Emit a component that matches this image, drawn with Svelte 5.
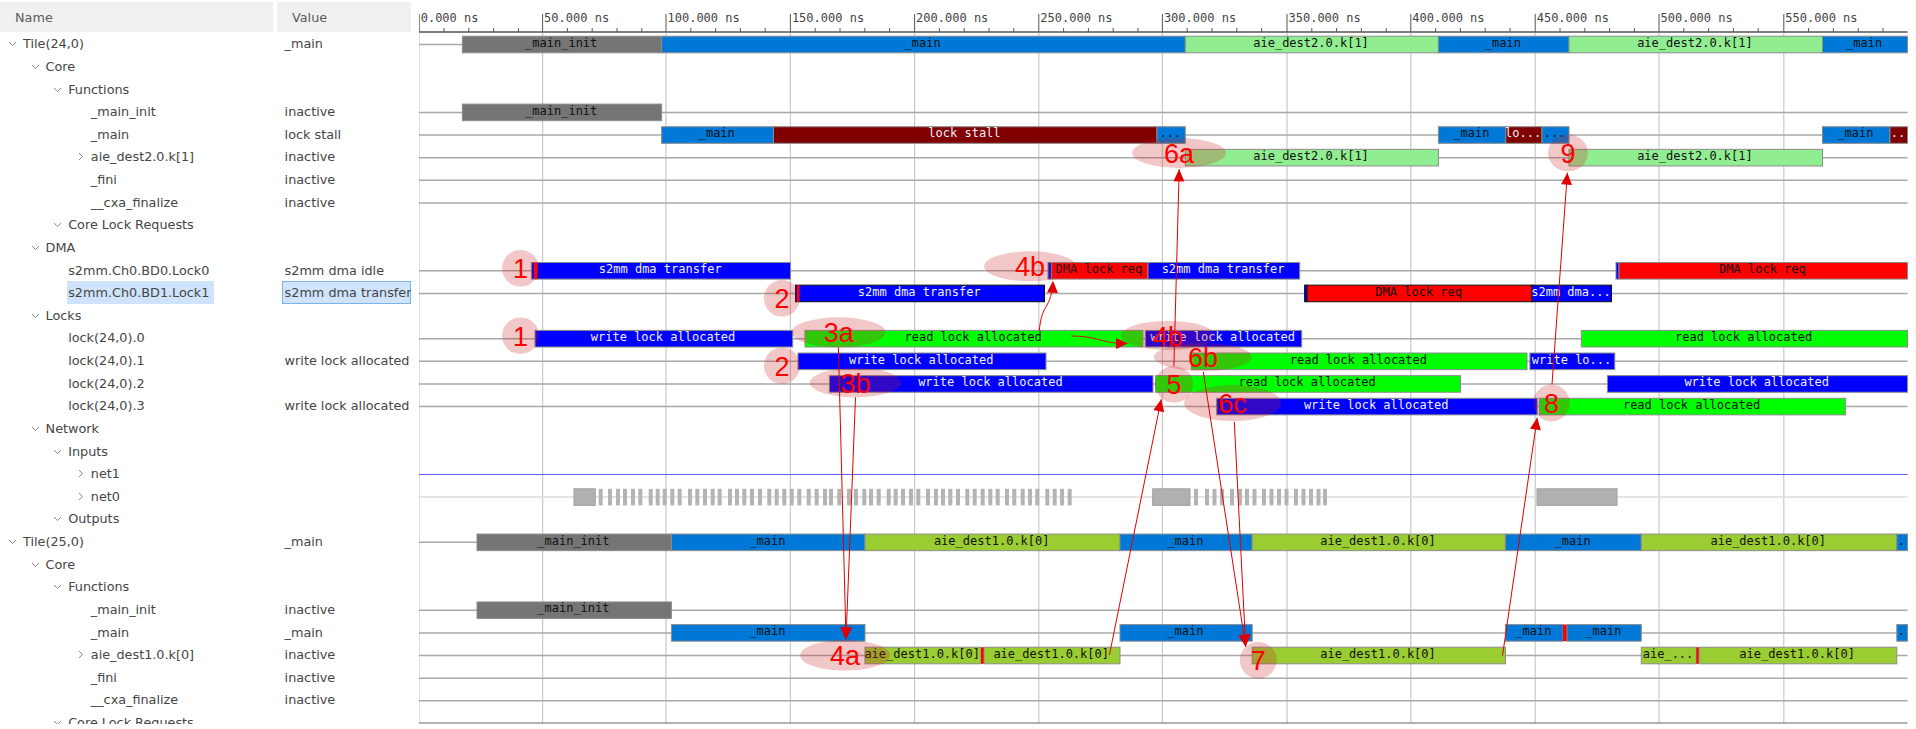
<script>
    // tree rows: name, value, depth, chevron (down / right / none)
    const tile = (n, fn, mainVal) => [
        [`Tile(${n},0)`, "_main", 0, "d"],
        ["Core", "", 1, "d"],
        ["Functions", "", 2, "d"],
        ["_main_init", "inactive", 3],
        ["_main", mainVal, 3],
        [fn, "inactive", 3, "r"],
        ["_fini", "inactive", 3],
        ["__cxa_finalize", "inactive", 3],
        ["Core Lock Requests", "", 2, "d"],
    ];

    const rows = [
        ...tile(24, "aie_dest2.0.k[1]", "lock stall"),
        ["DMA", "", 1, "d"],
        ["s2mm.Ch0.BD0.Lock0", "s2mm dma idle", 2],
        ["s2mm.Ch0.BD1.Lock1", "s2mm dma transfer", 2, null, true],
        ["Locks", "", 1, "d"],
        ["lock(24,0).0", "", 2],
        ["lock(24,0).1", "write lock allocated", 2],
        ["lock(24,0).2", "", 2],
        ["lock(24,0).3", "write lock allocated", 2],
        ["Network", "", 1, "d"],
        ["Inputs", "", 2, "d"],
        ["net1", "", 3, "r"],
        ["net0", "", 3, "r"],
        ["Outputs", "", 2, "d"],
        ...tile(25, "aie_dest1.0.k[0]", "_main"),
    ];

    const rowY = (i) => 44.5 + 22.63 * i;

    const ticks = [419.2, 542.6, 666, 790.4, 914.6, 1038.8, 1162.4, 1287, 1410.8, 1535.2, 1659, 1783.8];
    const ends = 1907.5;
    const minors = ticks.flatMap((t) => [1, 2, 3, 4].map((k) => t + 24.8 * k)).filter((x) => x < ends);
    const tickLabel = (i) => `${(i * 50).toFixed(3)} ns`;

    const signalRows = [0, 3, 4, 5, 6, 7, 10, 11, 13, 14, 15, 16, 22, 25, 26, 27, 28, 29];

    const D2 = "aie_dest2.0.k[1]";
    const D1 = "aie_dest1.0.k[0]";
    const WL = "write lock allocated";
    const RL = "read lock allocated";
    const S2 = "s2mm dma transfer";
    const LR = "DMA lock req";

    // [row, x1, x2, kind, label]
    const bars = [
        [0, 462.4, 661.6, "init", "_main_init"],
        [0, 661.6, 1185.3, "main", "_main"],
        [0, 1185.3, 1438.4, "fn2", D2],
        [0, 1438.4, 1569, "main", "_main"],
        [0, 1569, 1822.5, "fn2", D2],
        [0, 1822.5, ends, "main", "_main"],
        [3, 462.4, 661.6, "init", "_main_init"],
        [4, 661.6, 773.5, "main", "_main"],
        [4, 773.5, 1157, "stall", "lock stall"],
        [4, 1157, 1185.3, "main", "..."],
        [4, 1438.4, 1505.8, "main", "_main"],
        [4, 1505.8, 1542, "stall", "lo..."],
        [4, 1542, 1569, "main", "..."],
        [4, 1822.5, 1890, "main", "_main"],
        [4, 1890, ends, "stall", ".."],
        [5, 1185.3, 1438.4, "fn2", D2],
        [5, 1569, 1822.5, "fn2", D2],

        [10, 531.4, 790.6, "write", S2],
        [10, 534, 537.5, "req flat", ""],
        [10, 1048, 1051.5, "write", ""],
        [10, 1051.5, 1148, "req", LR],
        [10, 1148, 1299.7, "write", S2],
        [10, 1616, 1619, "write", ""],
        [10, 1619, ends, "req", LR],
        [11, 795.5, 1044.5, "write sel", S2],
        [11, 797, 799.6, "req flat", ""],
        [11, 1304.6, 1307, "write sel", ""],
        [11, 1307, 1532, "req sel", LR],
        [11, 1532, 1611.5, "write sel", "s2mm dma..."],

        [13, 535, 792.7, "write", WL],
        [13, 805, 1142.9, "read", RL],
        [13, 1145.3, 1301.7, "write", WL],
        [13, 1581.3, ends, "read", RL],
        [14, 798, 1046, "write", WL],
        [14, 1191.4, 1527, "read", RL],
        [14, 1529.9, 1614.8, "write", "write lo..."],
        [15, 829.4, 1153, "write", WL],
        [15, 1155.5, 1460.5, "read", RL],
        [15, 1607.4, ends, "write", WL],
        [16, 1216.7, 1537.2, "write", WL],
        [16, 1539.3, 1845.4, "read", RL],

        [22, 477, 671.4, "init", "_main_init"],
        [22, 671.4, 865, "main", "_main"],
        [22, 865, 1120, "fn1", D1],
        [22, 1120, 1252.2, "main", "_main"],
        [22, 1252.2, 1505.4, "fn1", D1],
        [22, 1505.4, 1641.3, "main", "_main"],
        [22, 1641.3, 1896.8, "fn1", D1],
        [22, 1896.8, ends, "main", "."],
        [25, 477, 671.4, "init", "_main_init"],
        [26, 671.4, 865, "main", "_main"],
        [26, 1120, 1252.2, "main", "_main"],
        [26, 1505.4, 1563, "main", "_main"],
        [26, 1563, 1567, "req flat", ""],
        [26, 1567, 1641.3, "main", "_main"],
        [26, 1896.8, ends, "main", "."],
        [27, 865, 981, "fn1", D1],
        [27, 981, 984, "req flat", ""],
        [27, 984, 1120, "fn1", D1],
        [27, 1252.2, 1505.4, "fn1", D1],
        [27, 1641.3, 1696.4, "fn1", "aie_..."],
        [27, 1696.4, 1699, "req flat", ""],
        [27, 1699, 1896.8, "fn1", D1],
    ];

    // net0 activity: solid blocks and the packet stripes between them
    const netBlocks = [[574, 595.3], [1152.7, 1190], [1537, 1617]];
    const firstStripes = [
        600.7, 610, 618, 625, 633, 640.3, 650.7, 657.7, 664.7, 672.3, 679.7, 690, 697.3, 705, 712.7, 719.7, 730, 737,
        744.3, 752, 760, 769.3, 776.7, 784.3, 791.7, 799.3, 808.7, 816.7, 825, 831, 839.3, 849, 856, 864.3, 871, 878.7,
        888.7, 895.7, 903, 911, 918.3, 928, 936, 943, 950.3, 958, 967.3, 974.7, 982.7, 990.3, 997.7, 1007, 1014.3,
        1022.7, 1030, 1037.3, 1047.3, 1054.7, 1062, 1069.7,
    ];
    const secondStripes = [
        1196, 1207, 1214.5, 1222, 1232, 1240, 1247, 1254.5, 1264, 1271.5, 1279, 1286.5, 1296, 1303.5, 1311, 1318.5, 1325,
    ];
    const stripes = [...firstStripes, ...secondStripes];

    // [cx, cy, rx, ry, label]
    const notes = [
        [520.5, 268.3, 18.4, 18.3, "1"],
        [520.5, 335.7, 18.4, 18.3, "1"],
        [782, 298.3, 18, 18.3, "2"],
        [782, 365.7, 18, 18.3, "2"],
        [838.7, 332.3, 47, 15, "3a"],
        [855.5, 382.7, 45.7, 14.7, "3b"],
        [1030, 266.3, 46, 15, "4b"],
        [1168, 335.5, 47.3, 14.5, "4b"],
        [845, 655.3, 45, 15.3, "4a"],
        [1174, 384.3, 19, 18.3, "5"],
        [1179, 153, 47, 15, "6a"],
        [1203, 357, 49, 14, "6b"],
        [1232.6, 403, 48.5, 18, "6c"],
        [1258.3, 660.3, 18.4, 18.3, "7"],
        [1551.5, 403, 18.4, 18.5, "8"],
        [1568, 153, 20, 18.3, "9"],
    ];

    // straight arrows [x1, y1, tipX, tipY]
    const arrows = [
        [838.4, 347.3, 846, 639.3],
        [855.5, 397.3, 846, 639.3],
        [1109.4, 655, 1161.2, 399.3],
        [1502.5, 655.7, 1537.2, 417.7],
        [1173.9, 366, 1179.2, 169.3],
        [1552, 384.3, 1567.4, 172.7],
        [1203.3, 371.7, 1245.7, 646.7],
        [1234.3, 421.7, 1245.7, 646.7],
    ];

    function head(x1, y1, x2, y2, len = 12, half = 5.5) {
        const d = Math.hypot(x2 - x1, y2 - y1);
        const ux = (x2 - x1) / d;
        const uy = (y2 - y1) / d;
        const bx = x2 - ux * len;
        const by = y2 - uy * len;
        return `${x2},${y2} ${bx - uy * half},${by + ux * half} ${bx + uy * half},${by - ux * half}`;
    }
</script>

<div class="page">
    <div class="tree">
        <div class="head">
            <div class="head-cell name-head">Name</div>
            <div class="head-cell value-head">Value</div>
        </div>
        <div class="rows">
            {#each rows as [name, value, depth, chev, selected]}
                <div class="row">
                    <div class="name-cell" style="padding-left: {23 + 22.6 * depth}px">
                        <span class="chev">
                            {#if chev === "d"}
                                <svg width="9" height="9" viewBox="0 0 9 9"><path d="M1 3 L4.5 6.5 L8 3" /></svg>
                            {:else if chev === "r"}
                                <svg width="9" height="9" viewBox="0 0 9 9"><path d="M3 1 L6.5 4.5 L3 8" /></svg>
                            {/if}
                        </span>
                        <span class="name" class:selected>{name}</span>
                    </div>
                    <div class="value-cell" class:selected>{value}</div>
                </div>
            {/each}
        </div>
    </div>

    <svg class="wave" viewBox="419 0 1497 729" width="1497" height="729">
        <!-- grid -->
        {#each ticks as t, i}
            <line class="grid" class:first={i === 0} x1={t} x2={t} y1="33" y2="723" />
        {/each}

        <!-- ruler -->
        {#each ticks as t, i}
            <line class="tick" x1={t} x2={t} y1="14" y2="32" />
            <text class="ruler-text" x={t + 1.5} y="21.5">{tickLabel(i)}</text>
        {/each}
        {#each minors as m}
            <line class="tick" x1={m} x2={m} y1="28" y2="32" />
        {/each}
        <line class="axis" x1="419" x2={ends} y1="32" y2="32" />

        <!-- signal lines -->
        {#each signalRows as r}
            <line class="signal" x1="419" x2={ends} y1={rowY(r)} y2={rowY(r)} />
        {/each}
        <line class="net-top" x1="419" x2={ends} y1={rowY(19)} y2={rowY(19)} />
        <line class="net-line" x1="419" x2={ends} y1={rowY(20)} y2={rowY(20)} />
        <line class="bottom" x1="419" x2={ends} y1="723" y2="723" />

        <!-- net0 -->
        {#each netBlocks as [a, b]}
            <rect class="net-block" x={a} y={rowY(20) - 8.3} width={b - a} height="16.6" />
        {/each}
        {#each stripes as s}
            <rect class="net-stripe" x={s - 2} y={rowY(20) - 8.3} width="4" height="16.6" />
        {/each}

        <!-- bars -->
        {#each bars as [r, a, b, kind]}
            <rect class="bar {kind}" x={a} y={rowY(r) - 8.3} width={b - a} height="16.6" />
        {/each}
        {#each bars as [r, a, b, kind, label]}
            {#if label}
                <text class="bar-text {kind}" x={(a + b) / 2 - 0.8} y={rowY(r) + 2.2}>{label}</text>
            {/if}
        {/each}

        <!-- annotations -->
        {#each notes as [cx, cy, rx, ry]}
            <ellipse class="note" {cx} {cy} {rx} {ry} />
        {/each}
        {#each notes as [cx, cy, rx, ry, label]}
            <text class="note-text" x={cx} y={cy + 10}>{label}</text>
        {/each}

        {#each arrows as [x1, y1, x2, y2]}
            <line class="arrow" {x1} {y1} {x2} {y2} />
            <polygon class="arrow-head" points={head(x1, y1, x2, y2)} />
        {/each}
        <path class="arrow" d="M1039.2 330.7 C1041 315 1043 312 1047 305 C1051 298 1051 294 1052 290" />
        <polygon class="arrow-head" points={head(1052.5, 292, 1053, 280.7)} />
        <path class="arrow" d="M1071.4 336 C1095 336 1105 343 1117 343" />
        <polygon class="arrow-head" points={head(1116, 343.5, 1128, 343.5)} />
    </svg>

    <div class="scrollbar"><div class="thumb"></div></div>
</div>

<style>
    :global(body) {
        background: #fff;
    }

    .page {
        display: flex;
        width: 1916px;
        height: 729px;
        overflow: hidden;
        background: #fff;
    }

    .tree {
        flex: none;
        width: 419px;
        height: 724px;
        overflow: hidden;
        padding-top: 2px;
        box-sizing: border-box;
        font-family: "DejaVu Sans", sans-serif;
        font-size: 12.8px;
        color: #454545;
    }

    .head {
        display: flex;
        gap: 4px;
        width: 411px;
        height: 30px;
        margin-bottom: 0.5px;
    }

    .head-cell {
        display: flex;
        align-items: center;
        background: #f0f0f0;
        color: #5c5c5c;
    }

    .name-head {
        width: 273px;
        padding-left: 15px;
        box-sizing: border-box;
    }

    .value-head {
        flex: 1;
        padding-left: 15px;
    }

    .rows {
        display: grid;
        grid-auto-rows: 22.63px;
    }

    .row {
        display: grid;
        grid-template-columns: 281.6px 129.4px;
        align-items: stretch;
    }

    .name-cell {
        display: flex;
        align-items: center;
        white-space: nowrap;
        min-width: 0;
    }

    .chev {
        flex: none;
        width: 11px;
        height: 9px;
        display: flex;
        margin-left: -15px;
        margin-right: 4px;
    }

    .chev path {
        fill: none;
        stroke: #8a8a8a;
        stroke-width: 1;
    }

    .name {
        align-self: stretch;
        display: flex;
        align-items: center;
        padding: 0 5px 0 1px;
        margin-left: -1px;
    }

    .name.selected {
        background: #cfe3fc;
    }

    .value-cell {
        display: flex;
        align-items: center;
        padding-left: 3px;
        white-space: nowrap;
        overflow: hidden;
    }

    .value-cell.selected {
        background: #cfe3fc;
        box-shadow: inset 0 0 0 1px #7db4e6;
    }

    .wave {
        flex: none;
        display: block;
    }

    .grid {
        stroke: #c8c8c8;
        stroke-width: 1.2;
    }

    .grid.first {
        stroke: #d8d8d8;
    }

    .tick {
        stroke: #555;
        stroke-width: 1;
    }

    .axis {
        stroke: #555;
        stroke-width: 1.5;
    }

    .ruler-text {
        font-family: "DejaVu Sans Mono", monospace;
        font-size: 12px;
        fill: #444;
    }

    .signal {
        stroke: #a8a8a8;
        stroke-width: 1.5;
    }

    .net-top {
        stroke: #5c5cf0;
        stroke-width: 1;
    }

    .net-line {
        stroke: #dcdcdc;
        stroke-width: 1.5;
    }

    .bottom {
        stroke: #666;
        stroke-width: 1;
    }

    .net-block {
        fill: #b0b0b0;
        stroke: #a0a0a0;
        stroke-width: 1;
    }

    .net-stripe {
        fill: #b4b4b4;
    }

    .bar {
        stroke: #8c8c8c;
        stroke-width: 1;
    }

    .bar.sel {
        stroke: #111;
    }

    .bar.flat {
        stroke: none;
    }

    .bar.init {
        fill: #757575;
    }

    .bar.main {
        fill: #0078d7;
    }

    .bar.fn2 {
        fill: #90ee90;
    }

    .bar.fn1 {
        fill: #9acd32;
    }

    .bar.stall {
        fill: #800000;
    }

    .bar.write {
        fill: #0000ff;
    }

    .bar.read {
        fill: #00ff00;
    }

    .bar.req {
        fill: #ff0000;
    }

    .bar-text {
        font-family: "DejaVu Sans Mono", monospace;
        font-size: 12px;
        text-anchor: middle;
        fill: #111;
    }

    .bar-text.write,
    .bar-text.stall {
        fill: #f0f0ff;
    }

    .note {
        fill: rgba(200, 30, 30, 0.25);
    }

    .note-text {
        font-family: "Liberation Sans", sans-serif;
        font-size: 27px;
        text-anchor: middle;
        fill: #f00;
    }

    .arrow {
        fill: none;
        stroke: #e00000;
        stroke-width: 1;
    }

    .arrow-head {
        fill: #e00000;
    }

    .scrollbar {
        flex: none;
        width: 5px;
        margin-left: -1px;
        background: #fafafa;
    }

    .thumb {
        height: 590px;
        background: #f0f0f0;
    }
</style>
